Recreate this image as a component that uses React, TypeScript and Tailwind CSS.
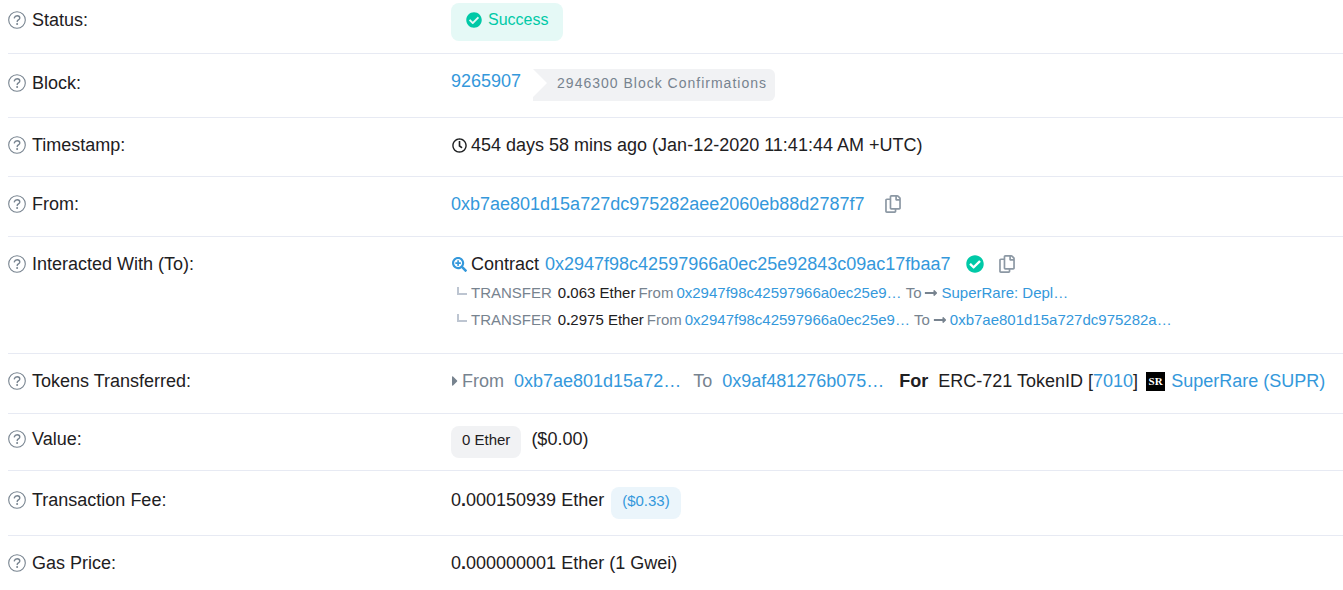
import { ReactNode } from "react"
import {
  FaCaretRight,
  FaCheckCircle,
  FaLongArrowAltRight,
  FaRegClock,
  FaRegCopy,
  FaSearchPlus,
} from "react-icons/fa"

interface RowProps {
  label: string
  className: string
  children: ReactNode
}

interface Transfer {
  whole: string
  decimals: string
  from: string
  to: string
}

const transfers: Transfer[] = [
  { whole: "0", decimals: "063", from: "0x2947f98c42597966a0ec25e9…", to: "SuperRare: Depl…" },
  { whole: "0", decimals: "2975", from: "0x2947f98c42597966a0ec25e9…", to: "0xb7ae801d15a727dc975282a…" },
]

function HelpIcon() {
  return (
    <svg viewBox="0 0 18 18" className="size-[18px] shrink-0 text-[#77838f]" fill="none" stroke="currentColor" aria-hidden="true">
      <circle cx="9" cy="9" r="8.3" strokeWidth="1.1" />
      <path d="M6.3 6.9C6.7 5.4 7.7 4.7 9.1 4.7c1.5 0 2.7.9 2.7 2.3 0 1.9-2.6 1.9-2.6 3.6" strokeWidth="1.4" strokeLinecap="round" />
      <circle cx="9.1" cy="13" r="1" fill="currentColor" stroke="none" />
    </svg>
  )
}

function Row({ label, className, children }: RowProps) {
  return (
    <div className={`flex items-start border-b border-[#e7eaf3] last:border-b-0 ${className}`}>
      <dt className="flex w-[443px] shrink-0 items-center gap-1.5">
        <HelpIcon />
        {label}
      </dt>
      <dd className="min-w-0 flex-1 whitespace-nowrap">{children}</dd>
    </div>
  )
}

function Address({ children }: { children: ReactNode }) {
  return <a href="#" className="text-[#3498db]">{children}</a>
}

function CopyButton() {
  return (
    <button type="button" aria-label="Copy address" className="text-[#8c98a4]">
      <FaRegCopy className="size-[18px]" />
    </button>
  )
}

function App() {
  return (
    <main className="overflow-x-hidden bg-white pl-2 font-['Liberation_Sans',Arial,sans-serif] text-[18px] text-[#1e2022]">
      <dl>
        <Row label="Status:" className="pt-[3px] pb-3 leading-[34px]">
          <span className="flex w-fit items-center gap-1.5 rounded-lg bg-[#e5f9f6] pt-[5px] pr-[15px] pb-[9px] pl-[15px] text-[16px] leading-6 text-[#00c9a7]">
            <FaCheckCircle className="size-4" />
            Success
          </span>
        </Row>

        <Row label="Block:" className="pt-[15px] pb-4 leading-7">
          <div className="flex items-start gap-3">
            <a href="#" className="leading-6 text-[#3498db]">9265907</a>
            <span className="flex">
              {/* notch on the left side of the label */}
              <svg viewBox="0 0 14 32" className="h-8 w-[14px]" aria-hidden="true">
                <path d="M0 0H14V32H0V28L14 14Z" fill="#f1f2f4" />
              </svg>
              <span className="rounded-r-md bg-[#f1f2f4] pt-[3px] pr-2 pb-[7px] pl-2.5 text-[14px] leading-[22px] tracking-[1px] text-[#77838f]">
                2946300 Block Confirmations
              </span>
            </span>
          </div>
        </Row>

        <Row label="Timestamp:" className="pt-[13px] pb-[17px] leading-7">
          <div className="flex items-center gap-1">
            <FaRegClock className="ml-px size-[15px]" />
            454 days 58 mins ago (Jan-12-2020 11:41:44 AM +UTC)
          </div>
        </Row>

        <Row label="From:" className="pt-[13px] pb-[18px] leading-7">
          <div className="flex items-center gap-5">
            <Address>0xb7ae801d15a727dc975282aee2060eb88d2787f7</Address>
            <CopyButton />
          </div>
        </Row>

        <Row label="Interacted With (To):" className="pt-[13px] pb-5 leading-7">
          <div className="flex items-center">
            <FaSearchPlus className="mr-1 ml-px size-[15px] text-[#3498db]" />
            <span className="mr-1.5">Contract</span>
            <Address>0x2947f98c42597966a0ec25e92843c09ac17fbaa7</Address>
            <FaCheckCircle className="mr-3.5 ml-4 size-[18px] text-[#00c9a7]" />
            <CopyButton />
          </div>
          <ul className="pt-px pl-1.5 text-[15px] leading-[27px]">
            {transfers.map((transfer) => (
              <li key={transfer.decimals} className="flex items-center text-[#77838f]">
                <span className="mr-1 mb-1 h-2 w-2.5 border-b-2 border-l-2 border-[#bdc5d1]" />
                <span className="mr-1.5">TRANSFER</span>
                <span className="mr-[3px] text-[#1e2022]">
                  {transfer.whole}<b>.</b>{transfer.decimals} Ether
                </span>
                <span className="mr-[3px]">From</span>
                <Address>{transfer.from}</Address>
                <span className="mr-[3px] ml-1">To</span>
                <FaLongArrowAltRight className="mr-[3px] size-[14px]" />
                <Address>{transfer.to}</Address>
              </li>
            ))}
          </ul>
        </Row>

        <Row label="Tokens Transferred:" className="pt-[13px] pb-[18px] leading-7">
          <div className="flex items-center">
            <FaCaretRight className="mr-1 ml-px h-4 w-1.5 text-[#77838f]" />
            <span className="mr-2.5 text-[#77838f]">From</span>
            <Address>0xb7ae801d15a72…</Address>
            <span className="mr-2.5 ml-3 text-[#77838f]">To</span>
            <Address>0x9af481276b075…</Address>
            <b className="mr-2.5 ml-[15px]">For</b>
            <span className="mr-2">
              ERC-721 TokenID [<Address>7010</Address>]
            </span>
            <span className="mr-1.5 flex size-[19px] items-center justify-center bg-black font-['Liberation_Serif',serif] text-[11px] font-bold text-white">
              SR
            </span>
            <Address>SuperRare (SUPR)</Address>
          </div>
        </Row>

        <Row label="Value:" className="pt-[11px] pb-3 leading-7">
          <div className="flex items-start gap-2.5">
            <span className="mt-px rounded-lg bg-[#f1f2f4] px-[11px] pt-[3px] pb-[7px] text-[15px] leading-[22px]">0 Ether</span>
            <span>($0.00)</span>
          </div>
        </Row>

        <Row label="Transaction Fee:" className="pt-[15px] pb-4 leading-7">
          <div className="flex items-start gap-[7px]">
            <span>0<b>.</b>000150939 Ether</span>
            <span className="mt-px rounded-lg bg-[#ebf5fb] px-[11px] pt-[3px] pb-[7px] text-[15px] leading-[22px] text-[#3498db]">($0.33)</span>
          </div>
        </Row>

        <Row label="Gas Price:" className="pt-[13px] leading-7">
          0<b>.</b>000000001 Ether (1 Gwei)
        </Row>
      </dl>
    </main>
  )
}

export default App
